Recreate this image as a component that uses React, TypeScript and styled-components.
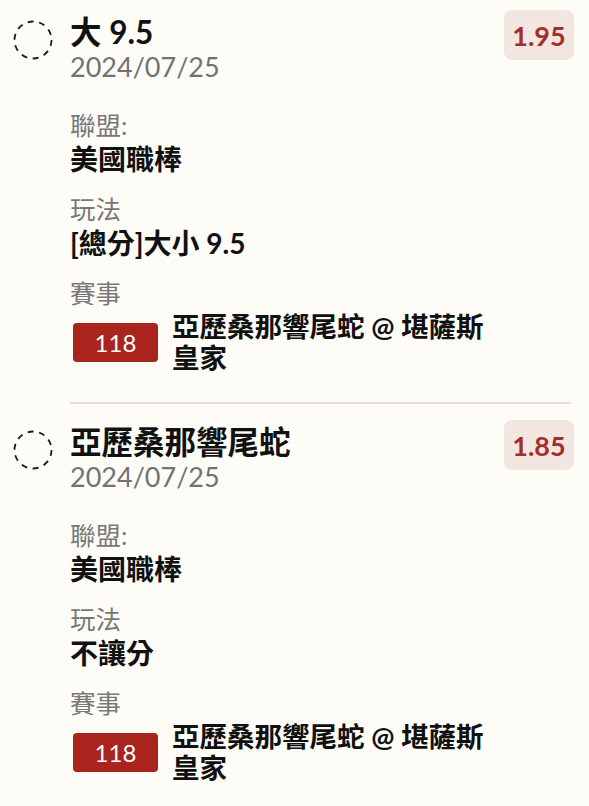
import styled, { createGlobalStyle } from "styled-components";

const GlobalStyle = createGlobalStyle`
  html, body {
    margin: 0;
    padding: 0;
    background: #fdfcf6;
  }
  body {
    font-family: Lato, "Noto Sans CJK TC", sans-serif;
    color: #111;
  }
`;

const List = styled.main`
  display: flex;
  flex-direction: column;
  width: 589px;
`;

const Bet = styled.article`
  display: flex;
  gap: 17px;
  padding: 10px 15px 29px 13px;
`;

const Pick = styled.svg`
  flex: none;
  width: 40px;
  height: 40px;
  margin-top: 10px;
`;

const Content = styled.div`
  flex: 1;
  display: flex;
  flex-direction: column;
`;

const Header = styled.header`
  display: flex;
  justify-content: space-between;
  align-items: flex-start;
`;

const Heading = styled.div`
  display: flex;
  flex-direction: column;
  padding-top: 4px;
`;

const Title = styled.h2`
  margin: 0;
  font-size: 31.5px;
  font-weight: 700;
  line-height: 36px;
  color: #111;
`;

const Date = styled.time`
  font-size: 27px;
  line-height: 34px;
  color: #727272;
`;

const Odds = styled.span`
  flex: none;
  width: 70px;
  height: 50px;
  display: flex;
  align-items: center;
  justify-content: center;
  border-radius: 8px;
  background: #f3e5e0;
  color: #a2302a;
  font-size: 27px;
  font-weight: 700;
`;

const Fields = styled.dl`
  display: flex;
  flex-direction: column;
  gap: 15px;
  margin: 24px 0 0;
`;

const Field = styled.div`
  display: flex;
  flex-direction: column;
`;

const Label = styled.dt`
  font-size: 25.5px;
  line-height: 34px;
  color: #787878;
`;

const Value = styled.dd`
  margin: 0;
  font-size: 28px;
  font-weight: 700;
  line-height: 35px;
  color: #111;
`;

const Match = styled.dd`
  display: flex;
  align-items: center;
  gap: 14px;
  margin: 1px 0 0 3px;
`;

const MatchNo = styled.span`
  flex: none;
  width: 85px;
  height: 39px;
  display: flex;
  align-items: center;
  justify-content: center;
  border-radius: 4px;
  background: #a8241d;
  color: #fff;
  font-size: 24px;
`;

const Teams = styled.span`
  max-width: 320px;
  font-size: 27.5px;
  font-weight: 700;
  line-height: 31px;
  color: #111;
`;

const Divider = styled.hr`
  margin: 0 18px 6px 70px;
  border: none;
  border-top: 2px solid #e3e0d8;
`;

type BetItem = {
  title: string;
  date: string;
  odds: string;
  league: string;
  market: string;
  matchNo: string;
  teams: string;
};

const bets: BetItem[] = [
  {
    title: "大 9.5",
    date: "2024/07/25",
    odds: "1.95",
    league: "美國職棒",
    market: "[總分]大小 9.5",
    matchNo: "118",
    teams: "亞歷桑那響尾蛇 @ 堪薩斯皇家",
  },
  {
    title: "亞歷桑那響尾蛇",
    date: "2024/07/25",
    odds: "1.85",
    league: "美國職棒",
    market: "不讓分",
    matchNo: "118",
    teams: "亞歷桑那響尾蛇 @ 堪薩斯皇家",
  },
];

const BetCard = ({ bet }: { bet: BetItem }) => (
  <Bet>
    <Pick viewBox="0 0 40 40">
      <circle
        cx="20"
        cy="20"
        r="18.5"
        fill="none"
        stroke="#1a1a1a"
        strokeWidth="1.8"
        strokeDasharray="6 5.6"
      />
    </Pick>
    <Content>
      <Header>
        <Heading>
          <Title>{bet.title}</Title>
          <Date>{bet.date}</Date>
        </Heading>
        <Odds>{bet.odds}</Odds>
      </Header>
      <Fields>
        <Field>
          <Label>聯盟:</Label>
          <Value>{bet.league}</Value>
        </Field>
        <Field>
          <Label>玩法</Label>
          <Value>{bet.market}</Value>
        </Field>
        <Field>
          <Label>賽事</Label>
          <Match>
            <MatchNo>{bet.matchNo}</MatchNo>
            <Teams>{bet.teams}</Teams>
          </Match>
        </Field>
      </Fields>
    </Content>
  </Bet>
);

const App = () => (
  <List>
    <GlobalStyle />
    {bets.map((bet, i) => (
      <div key={i}>
        {i > 0 && <Divider />}
        <BetCard bet={bet} />
      </div>
    ))}
  </List>
);

export default App;
